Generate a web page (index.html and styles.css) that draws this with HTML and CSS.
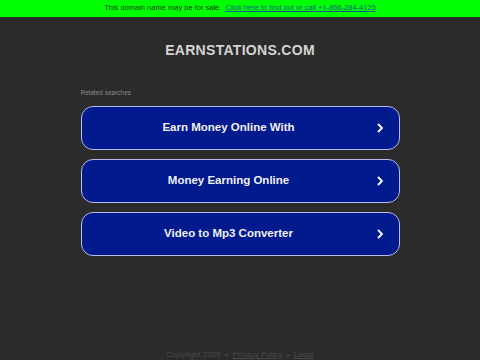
FILE: index.html
```html
<!DOCTYPE html>
<html>
<head>
<meta charset="utf-8">
<link rel="stylesheet" href="styles.css">
</head>
<body>
<div class="topbar">This domain name may be for sale. &nbsp;<a href="#" class="toplink">Click here to find out or call +1-866-284-4125</a></div>
<main class="main">
  <h1 class="title">EARNSTATIONS.COM</h1>
  <section class="related">
    <div class="related-label">Related searches</div>
    <a class="btn" href="#"><span class="btn-text">Earn Money Online With</span><svg class="chev" viewBox="0 0 10 12" width="10" height="12"><path d="M3 2 L7 6 L3 10" fill="none" stroke="#fff" stroke-width="1.8"/></svg></a>
    <a class="btn" href="#"><span class="btn-text">Money Earning Online</span><svg class="chev" viewBox="0 0 10 12" width="10" height="12"><path d="M3 2 L7 6 L3 10" fill="none" stroke="#fff" stroke-width="1.8"/></svg></a>
    <a class="btn" href="#"><span class="btn-text">Video to Mp3 Converter</span><svg class="chev" viewBox="0 0 10 12" width="10" height="12"><path d="M3 2 L7 6 L3 10" fill="none" stroke="#fff" stroke-width="1.8"/></svg></a>
  </section>
  <footer class="footer">Copyright 2025 &nbsp;•&nbsp; <a href="#" class="flink">Privacy Policy</a> &nbsp;•&nbsp; <a href="#" class="flink">Legal</a></footer>
</main>
</body>
</html>
```
FILE: styles.css
```css
html, body {
  margin: 0;
  padding: 0;
  background: #2b2b2b;
  font-family: "Liberation Sans", Arial, sans-serif;
  height: 360px;
  overflow: hidden;
}
.topbar {
  background: #00ff00;
  height: 17px;
  line-height: 15px;
  font-size: 7.5px;
  color: #1a3a1a;
  text-align: center;
  border-bottom: 1px solid #1e3a1e;
}
.toplink {
  color: #0b5a8a;
  text-decoration: underline;
}
.main {
  display: flex;
  flex-direction: column;
  align-items: center;
}
.title {
  margin: 23px 0 0;
  font-size: 14px;
  font-weight: bold;
  color: #d4d4d4;
  letter-spacing: 0.3px;
  line-height: 18px;
}
.related {
  width: 319px;
  margin-top: 30px;
  display: flex;
  flex-direction: column;
  gap: 9px;
}
.related-label {
  font-size: 6.5px;
  color: #8a8a8a;
  line-height: 8px;
}
.btn {
  box-sizing: border-box;
  height: 44px;
  border: 1.5px solid #b8bce6;
  border-radius: 12px;
  background: #011a8d;
  display: flex;
  align-items: center;
  justify-content: center;
  padding-right: 23px;
  position: relative;
  text-decoration: none;
}
.btn-text {
  color: #f0f0f0;
  font-size: 11.5px;
  font-weight: bold;
  margin-top: -3px;
}
.chev {
  position: absolute;
  right: 14px;
  top: 15px;
}
.footer {
  margin-top: 94px;
  font-size: 8px;
  line-height: 10px;
  color: #4a4a4a;
}
.flink {
  color: #4a4a4a;
  text-decoration: underline;
}
```
